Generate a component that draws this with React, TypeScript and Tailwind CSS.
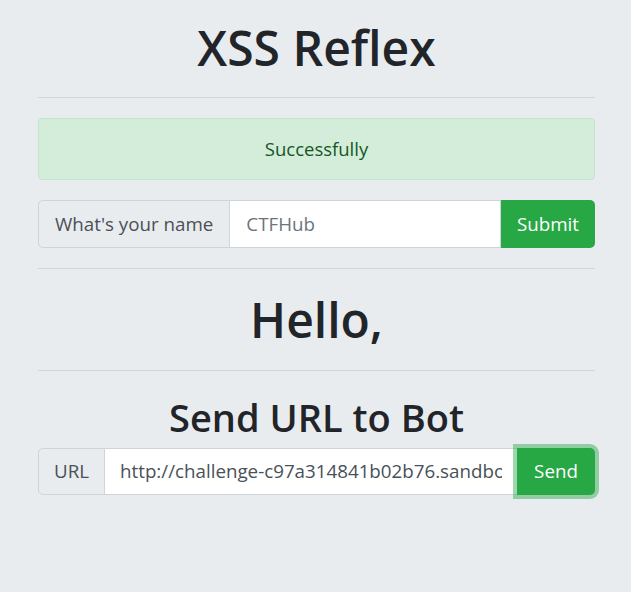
export default function App() {
  return (
    <div className="min-h-[592px] bg-[#e9ecef] text-[#212529] font-['Open_Sans',sans-serif]">
      <div className="ml-[38px] mr-[36px] pt-[15px]">
        <h1 className="text-center text-[48px] leading-[66px] font-semibold">XSS Reflex</h1>
        <hr className="mt-[16px] border-t border-[#d3d6d9]" />
        <div className="mt-[20px] h-[62px] flex items-center justify-center rounded-[4px] border border-[#c3e6cb] bg-[#d4edda] text-[#155724] text-[18.5px]">
          Successfully
        </div>
        <div className="mt-[20px] flex h-[48px] text-[18.75px]">
          <div className="flex items-center px-[16px] rounded-l-[5px] border border-[#ced4da] bg-[#e9ecef] text-[#495057]">
            What's your name
          </div>
          <input
            className="flex-1 min-w-0 px-[16px] border-y border-r border-[#ced4da] bg-white text-[#495057] placeholder:text-[#6c757d] outline-none"
            placeholder="CTFHub"
          />
          <button className="w-[94px] rounded-r-[5px] bg-[#28a745] text-white">Submit</button>
        </div>
        <hr className="mt-[20px] border-t border-[#d3d6d9]" />
        <h1 className="mt-[18px] text-center text-[48px] leading-[66px] font-semibold">Hello,</h1>
        <hr className="mt-[17px] border-t border-[#d3d6d9]" />
        <h2 className="mt-[22px] text-center text-[38px] leading-[48px] font-semibold">Send URL to Bot</h2>
        <div className="mt-[7px] flex h-[47px] text-[18.75px]">
          <div className="flex items-center px-[15px] rounded-l-[5px] border border-[#ced4da] bg-[#e9ecef] text-[#495057]">
            URL
          </div>
          <input
            className="flex-1 min-w-0 px-[15px] border-y border-[#ced4da] bg-white text-[#495057] outline-none"
            readOnly
            value="http://challenge-c97a314841b02b76.sandbox.ctfhub.com:10800/"
          />
          <button className="w-[78px] rounded-r-[5px] bg-[#28a745] text-white ring-[4px] ring-[#28a745]/45">Send</button>
        </div>
      </div>
    </div>
  );
}
